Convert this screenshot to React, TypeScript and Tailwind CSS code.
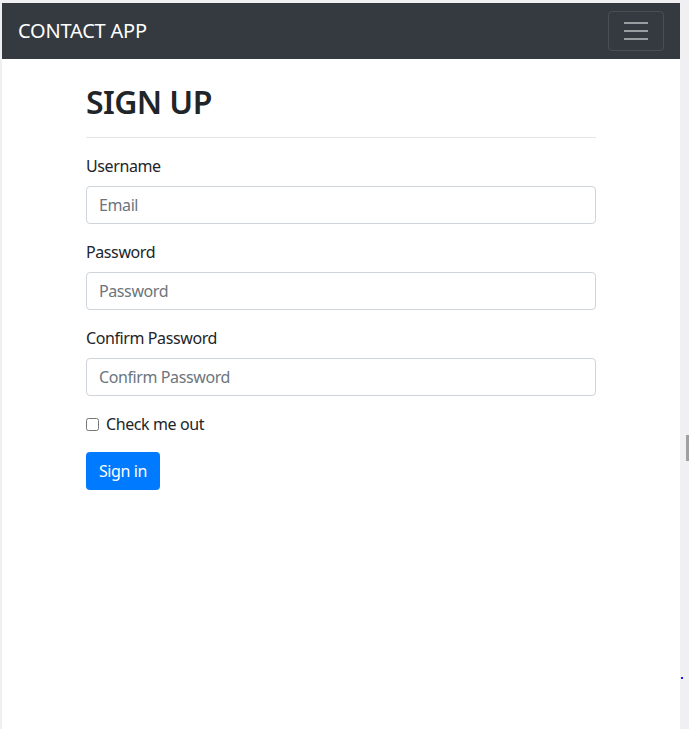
import React from "react";

const font = { fontFamily: '"Noto Sans", "Open Sans", sans-serif' };

export default function App() {
  return (
    <div className="flex h-[729px] w-[689px] bg-[#f0f0f2] pt-[3px] pl-[2px] overflow-hidden" style={font}>
      <div className="flex-1 bg-white flex flex-col">
        <nav className="h-14 bg-[#343a40] px-4 flex items-center justify-between">
          <span className="text-[20px] text-white leading-[30px] tracking-[-0.2px]">CONTACT APP</span>
          <button className="w-[56px] h-[40px] rounded border border-white/10 flex flex-col items-center justify-center gap-[6px]">
            <span className="block w-6 h-[2px] bg-white/50" />
            <span className="block w-6 h-[2px] bg-white/50" />
            <span className="block w-6 h-[2px] bg-white/50" />
          </button>
        </nav>
        <div className="mx-auto w-[540px] px-[15px] pt-6 text-[#212529] tracking-[-0.4px]">
          <h2 className="text-[32px] font-semibold leading-[38px] mb-2 tracking-[-0.6px]">SIGN UP</h2>
          <hr className="my-4 border-0 border-t border-black/10" />
          <form className="flex flex-col">
            <div className="mb-4">
              <label className="block text-base leading-6 mb-2">Username</label>
              <input
                placeholder="Email"
                className="block w-full h-[38px] px-3 text-base border border-[#ced4da] rounded placeholder:text-[#6c757d] outline-none"
              />
            </div>
            <div className="mb-4">
              <label className="block text-base leading-6 mb-2">Password</label>
              <input
                placeholder="Password"
                className="block w-full h-[38px] px-3 text-base border border-[#ced4da] rounded placeholder:text-[#6c757d] outline-none"
              />
            </div>
            <div className="mb-4">
              <label className="block text-base leading-6 mb-2">Confirm Password</label>
              <input
                placeholder="Confirm Password"
                className="block w-full h-[38px] px-3 text-base border border-[#ced4da] rounded placeholder:text-[#6c757d] outline-none"
              />
            </div>
            <div className="mb-4 flex items-center h-6">
              <input type="checkbox" className="w-[13px] h-[13px] mr-[7px]" />
              <label className="text-base leading-6">Check me out</label>
            </div>
            <div>
              <button type="button" className="h-[38px] w-[74px] rounded bg-[#007bff] text-white text-base">
                Sign in
              </button>
            </div>
          </form>
        </div>
      </div>
      <div className="w-[9px] relative">
        <div className="absolute left-[6px] top-[432px] w-[3px] h-[26px] bg-[#a0a0a0]" />
        <div className="absolute left-[1px] top-[674px] w-[2px] h-[2px] bg-[#1a1aff]" />
      </div>
    </div>
  );
}
